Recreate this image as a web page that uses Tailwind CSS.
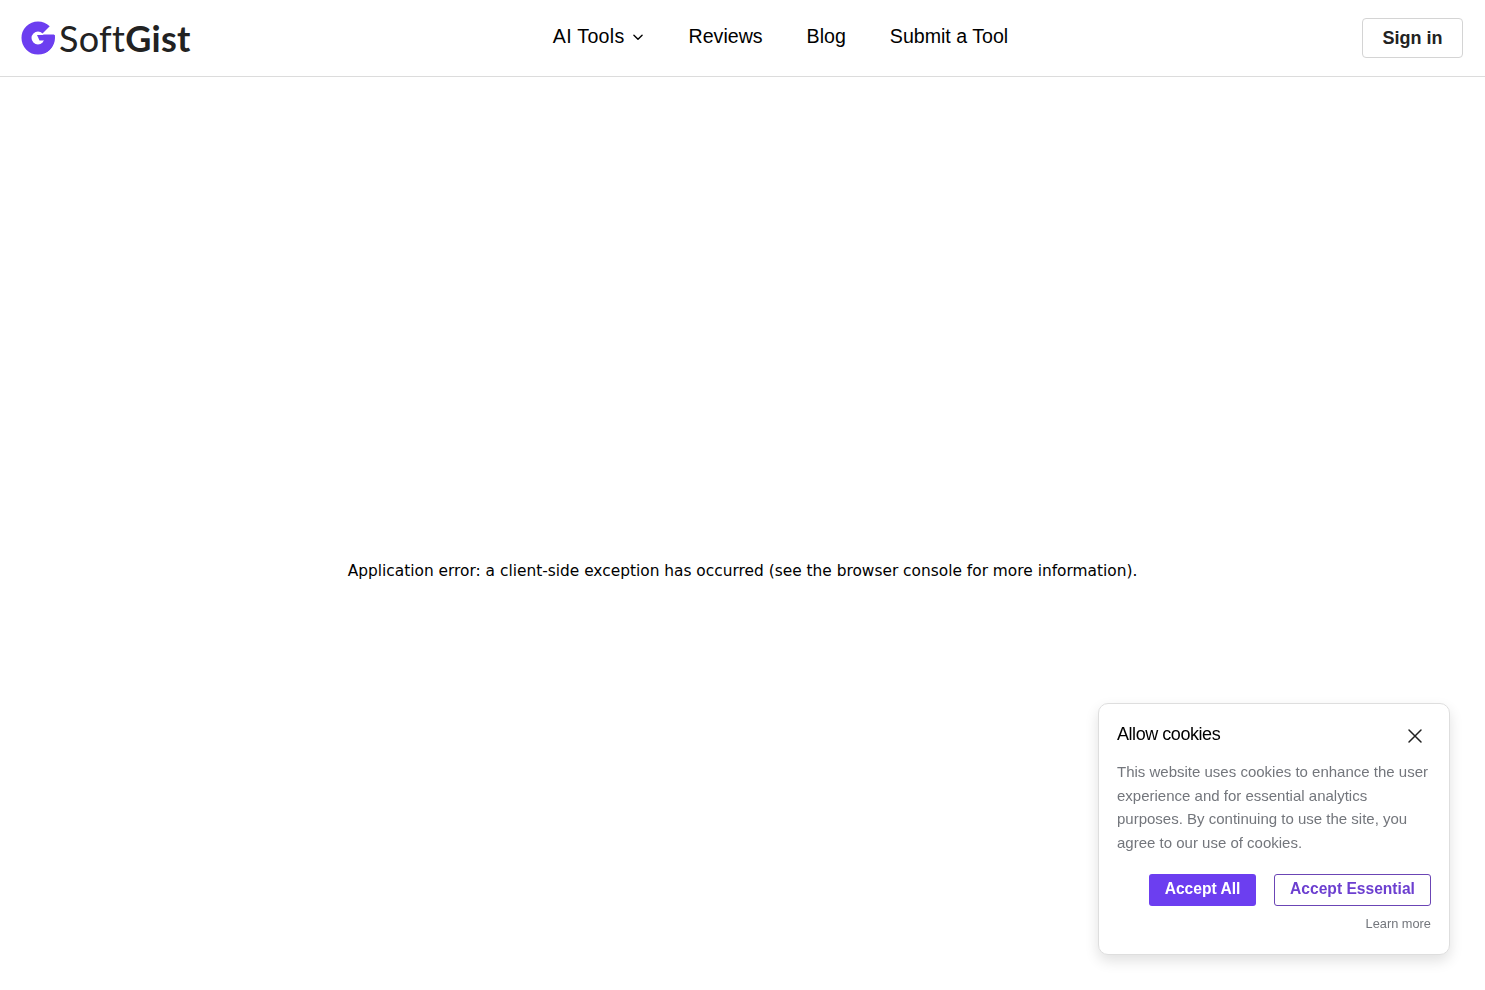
<!DOCTYPE html>
<html lang="en">
<head>
  <meta charset="UTF-8">
  <meta name="viewport" content="width=device-width, initial-scale=1.0">
  <title>SoftGist</title>
  <script src="https://cdn.jsdelivr.net/npm/@tailwindcss/browser@4"></script>
</head>
<body class="bg-white font-['Liberation_Sans',Arial,sans-serif] text-black h-[990px] overflow-hidden">
  <header class="h-[77px] border-b border-[#dcdcdc] flex items-center justify-between pl-[21px] pr-[22px]">
    <a href="#" class="flex items-center w-[172px]">
      <svg width="34" height="34" viewBox="0 0 34 34" class="shrink-0">
        <circle cx="17" cy="17" r="11.5" fill="none" stroke="#6c3ef0" stroke-width="10"/>
        <path d="M17 17 L34 0 L34 13.5 L17 13.5 Z" fill="#fff"/>
        <path d="M16 14 H33.8 A17 17 0 0 1 24 32 L22 22 Q24 20.500 24.500 19.500 H18.500 Z" fill="#6c3ef0"/>
      </svg>
      <span class="ml-[4px] font-['Lato',sans-serif] text-[36px] leading-none tracking-[0.3px] text-[#222222]">Soft<span class="font-bold">Gist</span></span>
    </a>
    <nav class="flex items-center gap-[44px] text-[19.6px] -mt-[3px] ml-[6px]">
      <a href="#" class="flex items-center gap-[6px] tracking-[0.3px]">AI Tools
        <svg width="14" height="14" viewBox="0 0 24 24" fill="none" stroke="currentColor" stroke-width="2.400" stroke-linecap="round" stroke-linejoin="round" class="mt-[2px]"><path d="M5 9l7 7 7-7"/></svg>
      </a>
      <a href="#">Reviews</a>
      <a href="#">Blog</a>
      <a href="#">Submit a Tool</a>
    </nav>
    <button class="w-[101px] h-[40px] border border-[#d4d4d4] rounded-[4px] text-[18px] font-bold text-[#222222]">Sign in</button>
  </header>

  <main class="pt-[485px] text-center">
    <h2 class="font-['DejaVu_Sans',sans-serif] text-[15.400px] leading-[18px] font-normal">Application error: a client-side exception has occurred (see the browser console for more information).</h2>
  </main>

  <div class="fixed right-[35px] bottom-[35px] w-[352px] h-[252px] bg-white border border-[#dedede] rounded-[10px] shadow-[0_6px_14px_rgba(0,0,0,0.12)] pt-[18px] px-[18px]">
    <div class="flex justify-between">
      <h3 class="text-[18px] leading-[24px] tracking-[-0.45px]">Allow cookies</h3>
      <button class="mt-[4px] mr-[8px]" aria-label="Close">
        <svg width="16" height="16" viewBox="0 0 16 16" fill="none" stroke="#222222" stroke-width="1.500" stroke-linecap="round"><path d="M2 2l12 12M14 2L2 14"/></svg>
      </button>
    </div>
    <p class="mt-[15px] text-[15px] leading-[23.700px] text-[#73767c] -translate-y-px">This website uses cookies to enhance the user experience and for essential analytics purposes. By continuing to use the site, you agree to our use of cookies.</p>
    <div class="mt-[18px] flex justify-end gap-[18px]">
      <button class="w-[107px] h-[32px] rounded-[3px] bg-[#6c3ef0] text-white text-[15.600px] font-bold pb-[2px]">Accept All</button>
      <button class="w-[157px] h-[32px] rounded-[3px] border border-[#6b45b5] text-[#6c3fd0] text-[15.600px] font-bold pb-[2px]">Accept Essential</button>
    </div>
    <div class="mt-[9px] text-right text-[12.800px] leading-[18px] text-[#73767c]"><a href="#">Learn more</a></div>
  </div>
</body>
</html>
